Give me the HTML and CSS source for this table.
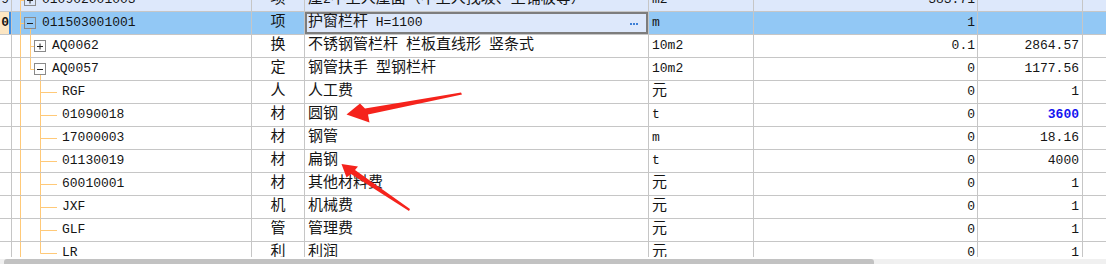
FILE: index.html
```html
<!DOCTYPE html>
<html lang="zh">
<head>
<meta charset="utf-8">
<link rel="stylesheet" href="styles.css">
</head>
<body>
<div class="page">
  <div class="grid">
    <div class="rows">
      <div class="row row-hl">
        <div class="c-num">9</div>
        <div class="c-code"><svg class="tr w30" viewBox="0 0 30 22"><path class="ln" d="M8.5 0V22M8.5 11.5H12"/><rect class="bx" x="12.5" y="5.5" width="11" height="11"/><path class="sg" d="M15 11.5H21M18 8.5V14.5"/></svg><span>010902001003</span></div>
        <div class="c-type zh">项</div>
        <div class="c-name"><span class="zh">屋</span>2 <span class="zh">不上人屋面（不上人找坡、上铺板等）</span></div>
        <div class="c-unit">m2</div>
        <div class="c-qty">383.71</div>
        <div class="c-price"></div>
        <div class="c-end"></div>
      </div>
      <div class="row row-sel">
        <div class="c-num sel-num"><b>0</b></div>
        <div class="c-code"><svg class="tr w30" viewBox="0 0 30 22"><path class="ln" d="M8.5 0V22M8.5 11.5H12M18.5 17V22"/><rect class="bx" x="12.5" y="5.5" width="11" height="11"/><path class="sg" d="M15 11.5H21"/></svg><span>011503001001</span></div>
        <div class="c-type zh">项</div>
        <div class="c-name edit"><span class="grow"><span class="zh">护窗栏杆</span> H=1100</span><svg class="dots" viewBox="0 0 8 2"><rect x="0" y="0" width="2" height="2"/><rect x="3" y="0" width="2" height="2"/><rect x="6" y="0" width="2" height="2"/></svg></div>
        <div class="c-unit">m</div>
        <div class="c-qty">1</div>
        <div class="c-price"></div>
        <div class="c-end"></div>
      </div>
      <div class="row">
        <div class="c-num"></div>
        <div class="c-code"><svg class="tr w40" viewBox="0 0 40 22"><path class="ln" d="M8.5 0V22M18.5 0V22M18.5 11.5H22"/><rect class="bx" x="22.5" y="5.5" width="11" height="11"/><path class="sg" d="M25 11.5H31M28 8.5V14.5"/></svg><span>AQ0062</span></div>
        <div class="c-type zh">换</div>
        <div class="c-name zh">不锈钢管栏杆 栏板直线形 竖条式</div>
        <div class="c-unit">10m2</div>
        <div class="c-qty">0.1</div>
        <div class="c-price">2864.57</div>
        <div class="c-end"></div>
      </div>
      <div class="row">
        <div class="c-num"></div>
        <div class="c-code"><svg class="tr w40" viewBox="0 0 40 22"><path class="ln" d="M8.5 0V22M18.5 0V11.5H22M28.5 17V22"/><rect class="bx" x="22.5" y="5.5" width="11" height="11"/><path class="sg" d="M25 11.5H31"/></svg><span>AQ0057</span></div>
        <div class="c-type zh">定</div>
        <div class="c-name zh">钢管扶手 型钢栏杆</div>
        <div class="c-unit">10m2</div>
        <div class="c-qty">0</div>
        <div class="c-price">1177.56</div>
        <div class="c-end"></div>
      </div>
      <div class="row">
        <div class="c-num"></div>
        <div class="c-code"><svg class="tr w50" viewBox="0 0 50 22"><path class="ln" d="M8.5 0V22M28.5 0V22M28.5 11.5H45"/></svg><span>RGF</span></div>
        <div class="c-type zh">人</div>
        <div class="c-name zh">人工费</div>
        <div class="c-unit zh">元</div>
        <div class="c-qty">0</div>
        <div class="c-price">1</div>
        <div class="c-end"></div>
      </div>
      <div class="row">
        <div class="c-num"></div>
        <div class="c-code"><svg class="tr w50" viewBox="0 0 50 22"><path class="ln" d="M8.5 0V22M28.5 0V22M28.5 11.5H45"/></svg><span>01090018</span></div>
        <div class="c-type zh">材</div>
        <div class="c-name zh">圆钢</div>
        <div class="c-unit">t</div>
        <div class="c-qty">0</div>
        <div class="c-price hot">3600</div>
        <div class="c-end"></div>
      </div>
      <div class="row">
        <div class="c-num"></div>
        <div class="c-code"><svg class="tr w50" viewBox="0 0 50 22"><path class="ln" d="M8.5 0V22M28.5 0V22M28.5 11.5H45"/></svg><span>17000003</span></div>
        <div class="c-type zh">材</div>
        <div class="c-name zh">钢管</div>
        <div class="c-unit">m</div>
        <div class="c-qty">0</div>
        <div class="c-price">18.16</div>
        <div class="c-end"></div>
      </div>
      <div class="row">
        <div class="c-num"></div>
        <div class="c-code"><svg class="tr w50" viewBox="0 0 50 22"><path class="ln" d="M8.5 0V22M28.5 0V22M28.5 11.5H45"/></svg><span>01130019</span></div>
        <div class="c-type zh">材</div>
        <div class="c-name zh">扁钢</div>
        <div class="c-unit">t</div>
        <div class="c-qty">0</div>
        <div class="c-price">4000</div>
        <div class="c-end"></div>
      </div>
      <div class="row">
        <div class="c-num"></div>
        <div class="c-code"><svg class="tr w50" viewBox="0 0 50 22"><path class="ln" d="M8.5 0V22M28.5 0V22M28.5 11.5H45"/></svg><span>60010001</span></div>
        <div class="c-type zh">材</div>
        <div class="c-name zh">其他材料费</div>
        <div class="c-unit zh">元</div>
        <div class="c-qty">0</div>
        <div class="c-price">1</div>
        <div class="c-end"></div>
      </div>
      <div class="row">
        <div class="c-num"></div>
        <div class="c-code"><svg class="tr w50" viewBox="0 0 50 22"><path class="ln" d="M8.5 0V22M28.5 0V22M28.5 11.5H45"/></svg><span>JXF</span></div>
        <div class="c-type zh">机</div>
        <div class="c-name zh">机械费</div>
        <div class="c-unit zh">元</div>
        <div class="c-qty">0</div>
        <div class="c-price">1</div>
        <div class="c-end"></div>
      </div>
      <div class="row">
        <div class="c-num"></div>
        <div class="c-code"><svg class="tr w50" viewBox="0 0 50 22"><path class="ln" d="M8.5 0V22M28.5 0V22M28.5 11.5H45"/></svg><span>GLF</span></div>
        <div class="c-type zh">管</div>
        <div class="c-name zh">管理费</div>
        <div class="c-unit zh">元</div>
        <div class="c-qty">0</div>
        <div class="c-price">1</div>
        <div class="c-end"></div>
      </div>
      <div class="row">
        <div class="c-num"></div>
        <div class="c-code"><svg class="tr w50" viewBox="0 0 50 22"><path class="ln" d="M8.5 0V22M28.5 0V11.5H45"/></svg><span>LR</span></div>
        <div class="c-type zh">利</div>
        <div class="c-name zh">利润</div>
        <div class="c-unit zh">元</div>
        <div class="c-qty">0</div>
        <div class="c-price">1</div>
        <div class="c-end"></div>
      </div>
    </div>
  </div>
  <div class="hscroll"><div class="thumb"></div></div>
  <svg class="annot" viewBox="0 0 1106 264">
    <polygon points="346.5,114.5 360,103.5 365,108.5 461,92.5 462,94.5 368,114.5 369.5,122.5"/>
    <polygon points="341.5,164 358,166.5 355,170 410,209 409,211 351,174 346.5,177.5"/>
  </svg>
</div>
</body>
</html>
```

FILE: styles.css
```css
html, body {
  margin: 0;
  padding: 0;
}

body {
  width: 1106px;
  height: 264px;
  overflow: hidden;
  background: #ffffff;
  font-family: "Liberation Mono", "Noto Sans CJK SC", monospace;
  font-size: 13px;
  color: #151515;
}

.page {
  position: relative;
  width: 1106px;
  height: 264px;
}

.grid {
  height: 257px;
  overflow: hidden;
}

.rows {
  margin-top: -11px;
}

.row {
  display: grid;
  grid-template-columns: 12px 240px 53px 344px 105px 224px 105px 23px;
  height: 23px;
}

.row > div {
  box-sizing: border-box;
  border-right: 1px solid #c6c6c6;
  border-bottom: 1px solid #c6c6c6;
  display: flex;
  align-items: center;
  height: 23px;
  line-height: 22px;
  white-space: nowrap;
  overflow: hidden;
}

.row > .c-end {
  border-right: none;
}

.zh {
  font-family: "Liberation Mono", "Noto Sans CJK SC", sans-serif;
  font-size: 15px;
  word-spacing: -1px;
}

.c-num {
  justify-content: flex-end;
  padding-right: 2px;
  font-size: 13px;
}

.c-num b {
  font-weight: bold;
}

.sel-num {
  background: #fce6c3;
  box-shadow: inset -2px 0 0 #3a8ee8;
}

.row-hl > div {
  background: #dde8fb;
}

.row-sel > div {
  background: #92c8f5;
}

.row-sel > .sel-num {
  background: #fce6c3;
}

.c-code {
  padding: 0;
}

.tr {
  flex: none;
  height: 22px;
  align-self: flex-start;
}

.w30 { width: 30px; }
.w40 { width: 40px; }
.w50 { width: 50px; }

.tr .ln {
  fill: none;
  stroke: #ffc978;
  stroke-width: 1;
}

.tr .bx {
  fill: none;
  stroke: #8a8a8a;
  stroke-width: 1;
}

.tr .sg {
  fill: none;
  stroke: #222222;
  stroke-width: 1;
}

.c-type {
  justify-content: center;
}

.c-name {
  padding-left: 3px;
}

.row-sel > .edit {
  background: #dde8fb;
  box-shadow: inset 0 0 0 2px #7d7d7d;
  padding-right: 10px;
}

.grow {
  flex: 1;
}

.dots {
  width: 8px;
  height: 2px;
  fill: #3d7fd6;
  margin-top: 1px;
}

.c-unit {
  padding-left: 3px;
}

.c-qty {
  justify-content: flex-end;
  padding-right: 2px;
}

.c-price {
  justify-content: flex-end;
  padding-right: 3px;
}

.hot {
  color: #1414f0;
  font-weight: bold;
}

.hscroll {
  height: 7px;
  background: #f0f0f0;
}

.thumb {
  width: 870px;
  height: 5px;
  margin-top: 2px;
  margin-left: 4px;
  background: #c2c2c2;
  border-radius: 3px 3px 0 0;
}

.annot {
  position: absolute;
  left: 0;
  top: 0;
  width: 1106px;
  height: 264px;
  pointer-events: none;
}

.annot polygon {
  fill: #f5231c;
}
```
